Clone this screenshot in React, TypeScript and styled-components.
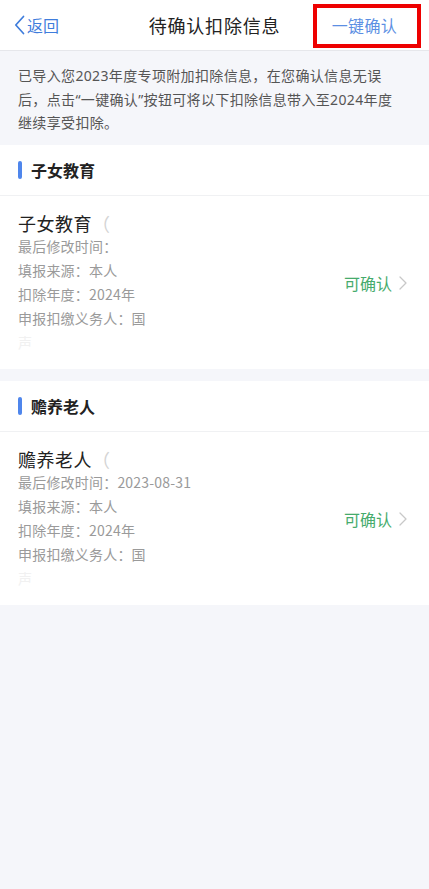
import React from "react";
import styled, { createGlobalStyle } from "styled-components";

const Global = createGlobalStyle`
  html, body { margin: 0; padding: 0; background: #f5f6fa; }
  body { font-family: "Noto Sans CJK SC", "Noto Sans", sans-serif; }
  * { box-sizing: border-box; }
`;

const Page = styled.div`
  min-height: 100vh;
  background: #f5f6fa;
`;

const Header = styled.header`
  position: relative;
  height: 51px;
  background: #fff;
  border-bottom: 1px solid #e6e7eb;
  display: grid;
  grid-template-columns: 1fr auto 1fr;
  align-items: center;
  padding: 0 14px;
`;

const Back = styled.div`
  display: flex;
  align-items: center;
  gap: 2px;
  color: #3f7ddc;
  font-size: 16px;
  justify-self: start;
`;

const Title = styled.div`
  font-size: 18px;
  color: #222;
  letter-spacing: 0.8px;
`;

const Action = styled.div`
  justify-self: end;
  margin-right: 18px;
  color: #5c8fe3;
  font-size: 16px;
  letter-spacing: 0.3px;
`;

const Highlight = styled.div`
  position: absolute;
  left: 313px;
  top: 4px;
  width: 108px;
  height: 44px;
  border: 4px solid #ee0000;
  pointer-events: none;
`;

const Notice = styled.div`
  padding: 13px 29px 10px 18px;
  font-family: "Noto Sans", "Noto Sans CJK SC", sans-serif;
  font-size: 14px;
  letter-spacing: 0.35px;
  line-height: 23.5px;
  color: #555;
`;

const Section = styled.section`
  background: #fff;
  margin-bottom: 12px;
`;

const SectionHead = styled.div`
  height: 51px;
  display: flex;
  align-items: center;
  gap: 9px;
  padding: 0 18px;
  border-bottom: 1px solid #f0f1f3;
`;

const Bar = styled.span`
  width: 4px;
  height: 18px;
  border-radius: 2px;
  background: #4f86ec;
`;

const SectionTitle = styled.span`
  font-size: 16px;
  font-weight: 700;
  color: #222;
`;

const Card = styled.div`
  display: flex;
  align-items: center;
  justify-content: space-between;
  padding: 16px 18px 15px 18px;
`;

const Info = styled.div`
  display: flex;
  flex-direction: column;
`;

const CardTitle = styled.div`
  font-size: 18px;
  line-height: 22px;
  color: #222;
  letter-spacing: 0.5px;
`;

const Paren = styled.span`
  color: #d4d4d4;
`;

const Row = styled.div<{ $faded?: boolean }>`
  font-size: 14px;
  line-height: 24px;
  height: 24px;
  letter-spacing: 0.2px;
  color: ${(p) => (p.$faded ? "#f1f1f1" : "#9a9a9a")};
`;

const Status = styled.div`
  display: flex;
  align-items: center;
  gap: 7px;
  color: #46ab6c;
  font-size: 16px;
  margin-right: 4px;
`;

type Item = { section: string; rows: string[] };

const items: Item[] = [
  {
    section: "子女教育",
    rows: ["最后修改时间：", "填报来源：本人", "扣除年度：2024年", "申报扣缴义务人：国"],
  },
  {
    section: "赡养老人",
    rows: ["最后修改时间：2023-08-31", "填报来源：本人", "扣除年度：2024年", "申报扣缴义务人：国"],
  },
];

const BackChevron = () => (
  <svg width="11" height="20" viewBox="0 0 11 20" fill="none">
    <path d="M9.5 1.5 L1.8 10 L9.5 18.5" stroke="#3f7ddc" strokeWidth="1.7" strokeLinecap="round" strokeLinejoin="round" />
  </svg>
);

const ChevronRight = () => (
  <svg width="8" height="14" viewBox="0 0 8 14" fill="none">
    <path d="M1 1 L7 7 L1 13" stroke="#c8c8c8" strokeWidth="1.3" strokeLinecap="round" strokeLinejoin="round" />
  </svg>
);

export default function App() {
  return (
    <Page>
      <Global />
      <Header>
        <Back>
          <BackChevron />
          <span>返回</span>
        </Back>
        <Title>待确认扣除信息</Title>
        <Action>一键确认</Action>
        <Highlight />
      </Header>
      <Notice>
        已导入您2023年度专项附加扣除信息，在您确认信息无误后，点击“一键确认”按钮可将以下扣除信息带入至2024年度继续享受扣除。
      </Notice>
      {items.map((it) => (
        <Section key={it.section}>
          <SectionHead>
            <Bar />
            <SectionTitle>{it.section}</SectionTitle>
          </SectionHead>
          <Card>
            <Info>
              <CardTitle>
                {it.section}
                <Paren>（</Paren>
              </CardTitle>
              {it.rows.map((r) => (
                <Row key={r}>{r}</Row>
              ))}
              <Row $faded>声</Row>
            </Info>
            <Status>
              <span>可确认</span>
              <ChevronRight />
            </Status>
          </Card>
        </Section>
      ))}
    </Page>
  );
}
